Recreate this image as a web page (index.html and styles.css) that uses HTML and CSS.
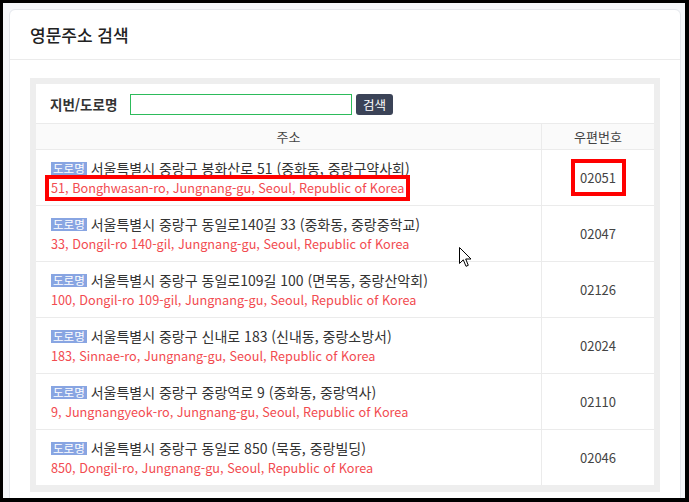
FILE: index.html
```html
<!DOCTYPE html>
<html lang="ko">
<head>
<meta charset="utf-8">
<title>영문주소 검색</title>
<link rel="stylesheet" href="styles.css">
</head>
<body>
<div class="frame">
  <div class="card">
    <div class="card-head">영문주소 검색</div>
    <div class="card-body">
      <div class="well">
        <div class="panel">
          <div class="search">
            <span class="search-label">지번/도로명</span>
            <input class="search-input" type="text">
            <button class="search-btn" type="button">검색</button>
          </div>
          <div class="table">
            <div class="row head">
              <div class="c-addr">주소</div>
              <div class="c-zip">우편번호</div>
            </div>
            <div class="row">
              <div class="c-addr">
                <div class="ko"><span class="badge">도로명</span> 서울특별시 중랑구 봉화산로 51 (중화동, 중랑구약사회)</div>
                <div class="en"><span class="mark mark-en">51, Bonghwasan-ro, Jungnang-gu, Seoul, Republic of Korea</span></div>
              </div>
              <div class="c-zip"><span class="mark mark-zip">02051</span></div>
            </div>
            <div class="row">
              <div class="c-addr">
                <div class="ko"><span class="badge">도로명</span> 서울특별시 중랑구 동일로140길 33 (중화동, 중랑중학교)</div>
                <div class="en">33, Dongil-ro 140-gil, Jungnang-gu, Seoul, Republic of Korea</div>
              </div>
              <div class="c-zip">02047</div>
            </div>
            <div class="row">
              <div class="c-addr">
                <div class="ko"><span class="badge">도로명</span> 서울특별시 중랑구 동일로109길 100 (면목동, 중랑산악회)</div>
                <div class="en">100, Dongil-ro 109-gil, Jungnang-gu, Seoul, Republic of Korea</div>
              </div>
              <div class="c-zip">02126</div>
            </div>
            <div class="row">
              <div class="c-addr">
                <div class="ko"><span class="badge">도로명</span> 서울특별시 중랑구 신내로 183 (신내동, 중랑소방서)</div>
                <div class="en">183, Sinnae-ro, Jungnang-gu, Seoul, Republic of Korea</div>
              </div>
              <div class="c-zip">02024</div>
            </div>
            <div class="row">
              <div class="c-addr">
                <div class="ko"><span class="badge">도로명</span> 서울특별시 중랑구 중랑역로 9 (중화동, 중랑역사)</div>
                <div class="en">9, Jungnangyeok-ro, Jungnang-gu, Seoul, Republic of Korea</div>
              </div>
              <div class="c-zip">02110</div>
            </div>
            <div class="row">
              <div class="c-addr">
                <div class="ko"><span class="badge">도로명</span> 서울특별시 중랑구 동일로 850 (묵동, 중랑빌딩)</div>
                <div class="en">850, Dongil-ro, Jungnang-gu, Seoul, Republic of Korea</div>
              </div>
              <div class="c-zip">02046</div>
            </div>
          </div>
        </div>
      </div>
    </div>
  </div>
  <svg class="cursor" width="13" height="21" viewBox="0 0 13 21"><path d="M0.5 0.5 L0.5 16.5 L4.3 12.8 L7 19.3 L9.3 18.3 L6.7 12 L12 12 Z" fill="#fff" stroke="#000" stroke-width="1" stroke-linejoin="miter"/></svg>
</div>
</body>
</html>
```

FILE: styles.css
```css
html, body {
  margin: 0;
  padding: 0;
  background: #000;
}
body {
  width: 689px;
  height: 502px;
  overflow: hidden;
  font-family: "Noto Sans CJK KR", "Noto Sans", sans-serif;
  color: #333;
}
.frame {
  position: relative;
  margin: 3px 4px 0 3px;
  height: 495px;
  background: #f5f7fa;
  overflow: hidden;
  padding: 6px 4px 0 6px;
  box-sizing: border-box;
}
.card {
  background: #fff;
  border: 1px solid #e4e7ec;
  border-radius: 6px;
}
.card-head {
  height: 49px;
  border-bottom: 1px solid #ebebeb;
  padding: 0 20px;
  display: flex;
  align-items: center;
  font-size: 17px;
  font-weight: 500;
  color: #222;
}
.card-body {
  padding: 18px 20px 20px 20px;
}
.well {
  background: #eeeeee;
  padding: 6px 6px 7px 6px;
}
.panel {
  background: #fff;
}
.search {
  height: 38px;
  border-bottom: 1px solid #ebebeb;
  display: flex;
  align-items: center;
  padding-left: 14px;
  padding-top: 1px;
  box-sizing: content-box;
}
.search-label {
  font-size: 13.5px;
  font-weight: 700;
  color: #333;
  width: 80px;
}
.search-input {
  width: 222px;
  height: 21px;
  box-sizing: border-box;
  border: 1px solid #2dbb5b;
  margin: 0;
  padding: 0 4px;
  outline: none;
}
.search-btn {
  margin-left: 4px;
  width: 37px;
  height: 21px;
  border: none;
  border-radius: 3px;
  background: #3b4357;
  color: #fff;
  font-family: "Noto Sans CJK KR", sans-serif;
  font-size: 12.5px;
  padding: 0;
  line-height: 21px;
}
.row {
  display: flex;
  height: 55px;
  border-bottom: 1px solid #ebebeb;
  font-size: 13px;
}
.row:last-child {
  border-bottom: none;
}
.row.head {
  height: 25px;
  background: #fafafa;
  color: #444;
}
.row.head .c-addr {
  justify-content: center;
  align-items: center;
  padding-left: 0;
}
.c-addr {
  width: 505px;
  padding-left: 15px;
  box-sizing: border-box;
  display: flex;
  flex-direction: column;
  justify-content: center;
}
.c-zip {
  flex: 1;
  border-left: 1px solid #ebebeb;
  display: flex;
  align-items: center;
  justify-content: center;
  color: #444;
}
.ko, .en {
  line-height: 20px;
  white-space: nowrap;
}
.ko {
  color: #333;
  font-size: 14px;
}
.en {
  color: #f24b50;
  font-size: 12.7px;
}
.badge {
  display: inline-block;
  background: #88a5e2;
  color: #fff;
  font-size: 11.5px;
  line-height: 13px;
  padding: 0 2px;
  vertical-align: 1px;
}
.mark {
  position: relative;
}
.mark::after {
  content: "";
  position: absolute;
  border: 4px solid #ff0000;
}
.mark-en::after {
  left: -6px;
  right: -6px;
  top: -3px;
  bottom: -4px;
}
.mark-zip::after {
  left: -9px;
  right: -10px;
  top: -9px;
  bottom: -9px;
}
.cursor {
  position: absolute;
  left: 456px;
  top: 244px;
}
```
